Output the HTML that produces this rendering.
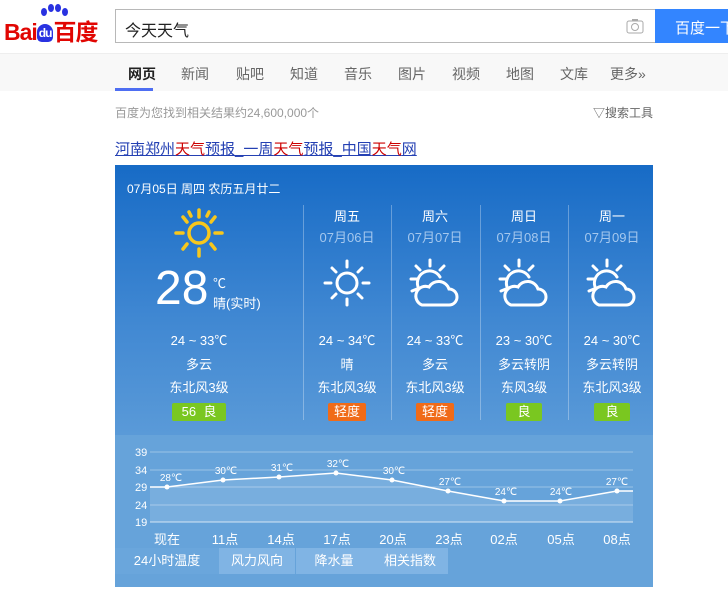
<!DOCTYPE html>
<html><head><meta charset="utf-8"><style>
*{margin:0;padding:0;box-sizing:border-box}
body{width:728px;height:592px;overflow:hidden;background:#fff;font-family:"Liberation Sans","Noto Sans CJK SC",sans-serif;position:relative}
.a{position:absolute}
.logo{left:4px;top:13px;font-size:23px;font-weight:bold;color:#e10602;letter-spacing:-1px}
.search{left:115px;top:9px;width:541px;height:34px;border:1px solid #b8b8b8;font-size:16px;padding:7px 9px;color:#222}
.btn{left:655px;top:9px;width:80px;height:34px;background:#3385ff;color:#fff;font-size:15px;padding:8px 0 0 20px}
.nav{left:0;top:53px;width:728px;height:38px;background:#f8f8f8;border-top:1px solid #eee}
.nav span{position:absolute;top:10px;font-size:14px;color:#666}
.card{left:115px;top:165px;width:538px;height:422px;background:linear-gradient(#176bc6 0,#3f87d2 150px,#5a9ad8 270px);}
.wc{color:#fff;text-align:center;position:absolute;width:88px;font-size:13px}
.dv{position:absolute;top:40px;width:1px;height:215px;background:rgba(255,255,255,.3)}
.bd{display:inline-block;color:#fff;font-size:13px;padding:0 6px;height:18px;line-height:18px;border-radius:2px}
.g{background:#7ac720}.o{background:#f06b18}
.tab{position:absolute;top:383px;height:26px;line-height:26px;text-align:center;color:#fff;font-size:13px;background:#80b4e4}
</style></head><body>
<div class="a logo">Bai<span style="display:inline-block;background:#2932e1;color:#fff;border-radius:10px 10px 6px 6px;font-size:12px;padding:2px 2px;vertical-align:3px">du</span>百度</div>
<div class="a" style="left:39px;top:4px;width:30px;height:14px">
<span class="a" style="left:2px;top:4px;width:6px;height:8px;background:#2932e1;border-radius:50%"></span>
<span class="a" style="left:9px;top:0;width:6px;height:8px;background:#2932e1;border-radius:50%"></span>
<span class="a" style="left:16px;top:0;width:6px;height:8px;background:#2932e1;border-radius:50%"></span>
<span class="a" style="left:23px;top:4px;width:6px;height:8px;background:#2932e1;border-radius:50%"></span></div>
<div class="a search">今天天气</div>
<svg class="a" style="left:626px;top:18px" width="18" height="16"><rect x="1" y="3" width="16" height="12" rx="2" fill="none" stroke="#aaa"/><circle cx="9" cy="9" r="3.5" fill="none" stroke="#aaa"/><rect x="6" y="1" width="6" height="2" fill="#aaa"/></svg>
<div class="a btn">百度一下</div>
<div class="a nav">
<span style="left:128px;color:#222;font-weight:bold">网页</span><span style="left:181px">新闻</span><span style="left:236px">贴吧</span><span style="left:290px">知道</span><span style="left:344px">音乐</span><span style="left:398px">图片</span><span style="left:452px">视频</span><span style="left:506px">地图</span><span style="left:560px">文库</span><span style="left:610px">更多»</span>
<div class="a" style="left:115px;top:34px;width:38px;height:3px;background:#4e6ef2"></div></div>
<div class="a" style="left:115px;top:104px;font-size:12px;color:#999">百度为您找到相关结果约24,600,000个</div>
<div class="a" style="left:593px;top:104px;font-size:12px;color:#666">▽搜索工具</div>
<div class="a" style="left:115px;top:138px;font-size:15px;color:#2440b3;text-decoration:underline">河南郑州<span style="color:#c00">天气</span>预报_一周<span style="color:#c00">天气</span>预报_中国<span style="color:#c00">天气</span>网</div>
<div class="a card">
<div class="a" style="left:12px;top:15px;color:#fff;font-size:12px">07月05日 周四 农历五月廿二</div>
<svg class="a" style="left:58px;top:42px" width="52" height="52" viewBox="0 0 52 52"><g stroke="#f7c71c" stroke-width="3.5" stroke-linecap="round" fill="none"><circle cx="26" cy="26" r="10"/><path d="M26 3v7M26 42v7M3 26h7M42 26h7M10 10l4 5M42 10l-4 5M10 42l4-5M42 42l-4-5M16 5l2 4M36 5l-2 4"/></g></svg>
<div class="a" style="left:40px;top:98px;color:#fff;font-size:48px;line-height:52px">28</div>
<div class="a" style="left:98px;top:108px;color:#fff;font-size:13px">℃</div>
<div class="a" style="left:98px;top:128px;color:#fff;font-size:13px">晴(实时)</div>
<div class="wc" style="left:40px;top:165px">24 ~ 33℃</div>
<div class="wc" style="left:40px;top:189px">多云</div>
<div class="wc" style="left:40px;top:212px">东北风3级</div>
<div class="wc" style="left:40px;top:238px"><span class="bd g" style="padding:0 10px">56 &nbsp;良</span></div>
<div class="dv" style="left:188px"></div><div class="dv" style="left:276px"></div><div class="dv" style="left:365px"></div><div class="dv" style="left:453px"></div>
<div class="wc" style="left:188px;top:41px">周五</div><div class="wc" style="left:188px;top:62px;color:#a5c8ee">07月06日</div>
<div class="wc" style="left:276px;top:41px">周六</div><div class="wc" style="left:276px;top:62px;color:#a5c8ee">07月07日</div>
<div class="wc" style="left:365px;top:41px">周日</div><div class="wc" style="left:365px;top:62px;color:#a5c8ee">07月08日</div>
<div class="wc" style="left:453px;top:41px">周一</div><div class="wc" style="left:453px;top:62px;color:#a5c8ee">07月09日</div>
<svg class="a" style="left:208px;top:94px" width="48" height="48" viewBox="0 0 48 48"><g stroke="#fff" stroke-width="3" stroke-linecap="round" fill="none"><circle cx="24" cy="24" r="10"/><path d="M24 2v6M24 40v6M2 24h6M40 24h6M9 9l4 4M39 9l-4 4M9 39l4-4M39 39l-4-4"/></g></svg>
<svg class="a" style="left:294px;top:93px" width="50" height="50" viewBox="0 0 50 50"><g stroke="#fff" stroke-width="3" stroke-linecap="round" fill="none"><path d="M10 31a12 12 0 1 1 21-12M21 2v6M2 21h6M7 8l4 4M35 8l-4 4M3 33l5-2"/><path d="M13 47h27a8 8 0 0 0 0-16a11 11 0 0 0-20-2a9 9 0 0 0-7 18z"/></g></svg>
<svg class="a" style="left:383px;top:93px" width="50" height="50" viewBox="0 0 50 50"><g stroke="#fff" stroke-width="3" stroke-linecap="round" fill="none"><path d="M10 31a12 12 0 1 1 21-12M21 2v6M2 21h6M7 8l4 4M35 8l-4 4M3 33l5-2"/><path d="M13 47h27a8 8 0 0 0 0-16a11 11 0 0 0-20-2a9 9 0 0 0-7 18z"/></g></svg>
<svg class="a" style="left:471px;top:93px" width="50" height="50" viewBox="0 0 50 50"><g stroke="#fff" stroke-width="3" stroke-linecap="round" fill="none"><path d="M10 31a12 12 0 1 1 21-12M21 2v6M2 21h6M7 8l4 4M35 8l-4 4M3 33l5-2"/><path d="M13 47h27a8 8 0 0 0 0-16a11 11 0 0 0-20-2a9 9 0 0 0-7 18z"/></g></svg>
<div class="wc" style="left:188px;top:165px">24 ~ 34℃</div><div class="wc" style="left:188px;top:189px">晴</div><div class="wc" style="left:188px;top:212px">东北风3级</div><div class="wc" style="left:188px;top:238px"><span class="bd o">轻度</span></div>
<div class="wc" style="left:276px;top:165px">24 ~ 33℃</div><div class="wc" style="left:276px;top:189px">多云</div><div class="wc" style="left:276px;top:212px">东北风3级</div><div class="wc" style="left:276px;top:238px"><span class="bd o">轻度</span></div>
<div class="wc" style="left:365px;top:165px">23 ~ 30℃</div><div class="wc" style="left:365px;top:189px">多云转阴</div><div class="wc" style="left:365px;top:212px">东风3级</div><div class="wc" style="left:365px;top:238px"><span class="bd g" style="padding:0 11px">良</span></div>
<div class="wc" style="left:453px;top:165px">24 ~ 30℃</div><div class="wc" style="left:453px;top:189px">多云转阴</div><div class="wc" style="left:453px;top:212px">东北风3级</div><div class="wc" style="left:453px;top:238px"><span class="bd g" style="padding:0 11px">良</span></div>
<div class="a" style="left:0;top:270px;width:538px;height:152px;background:#66a3da"></div>
<svg class="a" style="left:0;top:270px" width="538" height="112" viewBox="0 0 538 112" font-family="Liberation Sans" font-size="11" fill="#fff">
<g stroke="rgba(255,255,255,.35)"><line x1="35" y1="17" x2="518" y2="17"/><line x1="35" y1="35" x2="518" y2="35"/><line x1="35" y1="52" x2="518" y2="52"/><line x1="35" y1="70" x2="518" y2="70"/><line x1="35" y1="87" x2="518" y2="87" stroke="rgba(255,255,255,.7)"/></g>
<text x="20" y="21">39</text><text x="20" y="39">34</text><text x="20" y="56">29</text><text x="20" y="74">24</text><text x="20" y="91">19</text>
<polygon points="35,52 52,52 108,45 164,42 221,38 277,45 333,56 389,66 445,66 502,56 518,56 518,87 35,87" fill="rgba(255,255,255,.12)"/>
<polyline points="35,52 52,52 108,45 164,42 221,38 277,45 333,56 389,66 445,66 502,56 518,56" fill="none" stroke="#fff" stroke-width="1.5"/>
<g><circle cx="52" cy="52" r="2.5"/><circle cx="108" cy="45" r="2.5"/><circle cx="164" cy="42" r="2.5"/><circle cx="221" cy="38" r="2.5"/><circle cx="277" cy="45" r="2.5"/><circle cx="333" cy="56" r="2.5"/><circle cx="389" cy="66" r="2.5"/><circle cx="445" cy="66" r="2.5"/><circle cx="502" cy="56" r="2.5"/></g>
<g font-size="10" text-anchor="middle"><text x="56" y="46">28℃</text><text x="111" y="39">30℃</text><text x="167" y="36">31℃</text><text x="223" y="32">32℃</text><text x="279" y="39">30℃</text><text x="335" y="50">27℃</text><text x="391" y="60">24℃</text><text x="446" y="60">24℃</text><text x="502" y="50">27℃</text></g>
<g font-size="13" text-anchor="middle"><text x="52" y="109">现在</text><text x="110" y="109">11点</text><text x="166" y="109">14点</text><text x="222" y="109">17点</text><text x="278" y="109">20点</text><text x="334" y="109">23点</text><text x="389" y="109">02点</text><text x="446" y="109">05点</text><text x="502" y="109">08点</text></g>
</svg>
<div class="tab" style="left:0;width:104px;background:#6aa6dc">24小时温度</div>
<div class="tab" style="left:104px;width:76px">风力风向</div>
<div class="tab" style="left:181px;width:76px">降水量</div>
<div class="tab" style="left:257px;width:76px">相关指数</div>
</div>
</body></html>
